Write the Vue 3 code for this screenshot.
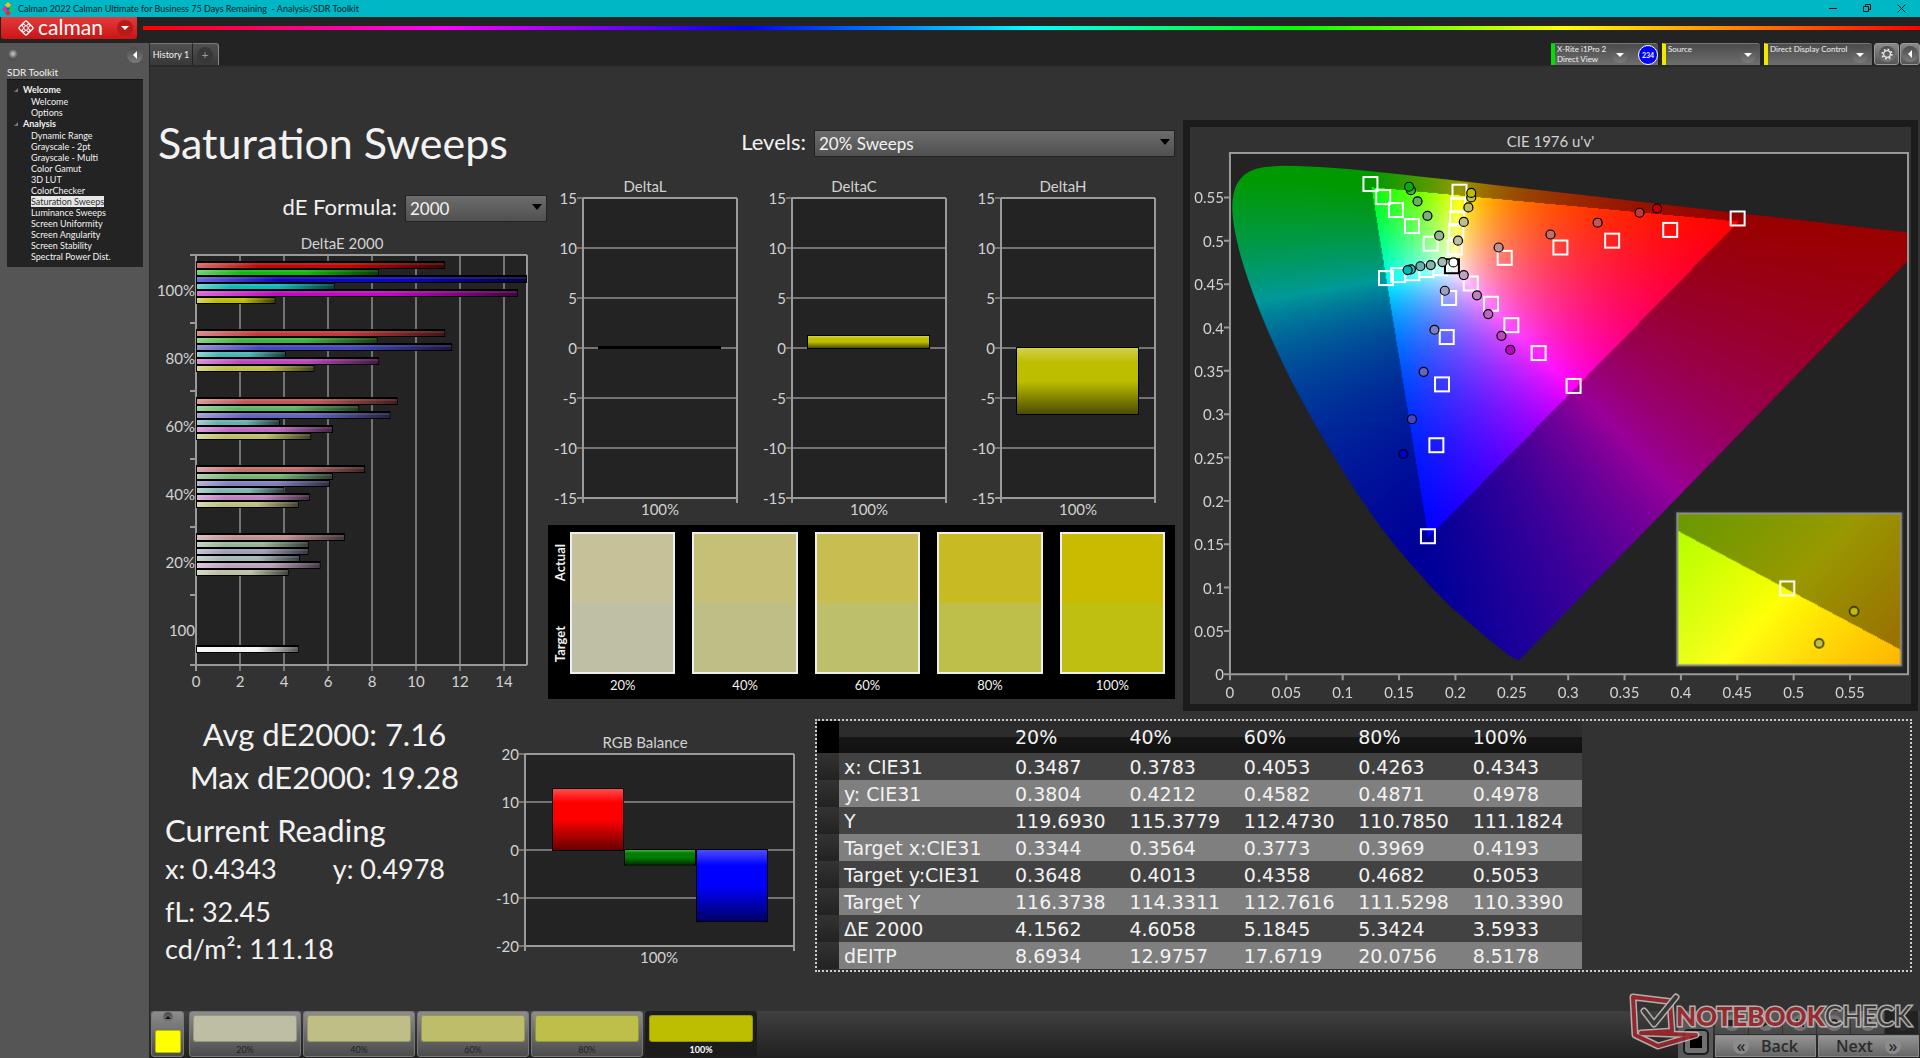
<script setup>
import { onMounted, ref } from 'vue'

const tree = [
  { name: 'Welcome', items: ['Welcome', 'Options'] },
  {
    name: 'Analysis',
    items: ['Dynamic Range', 'Grayscale - 2pt', 'Grayscale - Multi', 'Color Gamut', '3D LUT', 'ColorChecker', 'Saturation Sweeps', 'Luminance Sweeps', 'Screen Uniformity', 'Screen Angularity', 'Screen Stability', 'Spectral Power Dist.'],
  },
]

// DeltaE 2000, bars per saturation level: R, G, B, C, M, Y
const deGroups = [
  { label: '100%', values: [11.28, 8.26, 15, 6.25, 14.58, 3.56], colors: ['#c00808', '#10b810', '#0808c0', '#10b8b8', '#c008c0', '#bebe00'] },
  { label: '80%', values: [11.28, 8.2, 11.6, 4.03, 8.28, 5.33], colors: ['#c03a3a', '#40b440', '#4646be', '#48b4b4', '#c046c0', '#bebe4a'] },
  { label: '60%', values: [9.12, 7.37, 8.79, 3.76, 6.18, 5.19], colors: ['#c05656', '#60b460', '#6464be', '#68b0b0', '#c066c0', '#bebe6a'] },
  { label: '40%', values: [7.64, 6.18, 6.04, 3.97, 5.12, 4.62], colors: ['#c06e6e', '#78b478', '#8080be', '#84b4b4', '#c080c0', '#bebe86'] },
  { label: '20%', values: [6.72, 5.07, 5.07, 4.68, 5.61, 4.16], colors: ['#c09090', '#98b498', '#9e9ebe', '#a4b6b6', '#bea2be', '#bebea4'] },
  { label: '100', values: [4.62], colors: ['#f4f4f4'] },
]
const deX = (v) => 46 + v * 22
const deY = (g) => 25 + g * 68
const deBarY = (g, i) => (deGroups[g].values.length === 1 ? deY(g) + 50 : deY(g) + 6 + i * 7)

const deltas = [
  { title: 'DeltaL', value: 0.1 },
  { title: 'DeltaC', value: 1.2 },
  { title: 'DeltaH', value: -6.6 },
]
const deltaTicks = [15, 10, 5, 0, -5, -10, -15]
const deltaY = (v) => 174 - v * 10

const swatches = [
  { label: '20%', actual: '#c6c199', target: '#bebfa4' },
  { label: '40%', actual: '#c6bf78', target: '#bebf86' },
  { label: '60%', actual: '#c7bd50', target: '#bebf6a' },
  { label: '80%', actual: '#c8ba22', target: '#bebf4a' },
  { label: '100%', actual: '#c9bb00', target: '#bebf10' },
]
const tiles = [
  { label: '20%', color: '#bebea4' },
  { label: '40%', color: '#bebe86' },
  { label: '60%', color: '#bebe6a' },
  { label: '80%', color: '#bebe4a' },
  { label: '100%', color: '#bebe00' },
]

const rgbTicks = [20, 10, 0, -10, -20]
const rgbY = (v) => 136 - v * 48 / 10
const rgbBars = [
  { x: 68, value: 12.7, color: '#ff0000' },
  { x: 140, value: -3, color: '#008000' },
  { x: 212, value: -14.8, color: '#0000ff' },
]

const columns = ['20%', '40%', '60%', '80%', '100%']
const rows = [
  ['x: CIE31', '0.3487', '0.3783', '0.4053', '0.4263', '0.4343'],
  ['y: CIE31', '0.3804', '0.4212', '0.4582', '0.4871', '0.4978'],
  ['Y', '119.6930', '115.3779', '112.4730', '110.7850', '111.1824'],
  ['Target x:CIE31', '0.3344', '0.3564', '0.3773', '0.3969', '0.4193'],
  ['Target y:CIE31', '0.3648', '0.4013', '0.4358', '0.4682', '0.5053'],
  ['Target Y', '116.3738', '114.3311', '112.7616', '111.5298', '110.3390'],
  ['ΔE 2000', '4.1562', '4.6058', '5.1845', '5.3424', '3.5933'],
  ['dEITP', '8.6934', '12.9757', '17.6719', '20.0756', '8.5178'],
]

// CIE 1976 chart geometry
const PX = 40, PY = 26, PW = 679, PH = 522, SU = 1129, SV = 868
const cx = (u) => PX + u * SU
const cy = (v) => PY + PH - v * SV
const uTicks = [0, 0.05, 0.1, 0.15, 0.2, 0.25, 0.3, 0.35, 0.4, 0.45, 0.5, 0.55]
const targets = [
  [0.1246, 0.5655], [0.1359, 0.5505], [0.1472, 0.5355], [0.1614, 0.517], [0.1781, 0.4967],
  [0.2036, 0.5567], [0.2023, 0.5412], [0.2015, 0.5258], [0.2007, 0.5112], [0.1994, 0.4923],
  [0.2437, 0.4804], [0.2931, 0.4923], [0.339, 0.5002], [0.3905, 0.5126], [0.4503, 0.5258],
  [0.1384, 0.457], [0.1492, 0.4605], [0.1618, 0.4627], [0.1743, 0.4663], [0.1865, 0.4685],
  [0.2136, 0.4508], [0.2316, 0.4274], [0.2496, 0.4027], [0.2738, 0.3705], [0.3048, 0.3326],
  [0.1944, 0.4341], [0.1923, 0.389], [0.1881, 0.3344], [0.1831, 0.2642], [0.1756, 0.1592],
]
const readings = [
  [0.1856, 0.506, '#98b498'], [0.1752, 0.5289, '#78b478'], [0.1664, 0.5456, '#60b460'], [0.1605, 0.5584, '#40b440'], [0.1589, 0.5624, '#00b400'],
  [0.2023, 0.5002, '#bebea4'], [0.2074, 0.5218, '#bebe86'], [0.2115, 0.5386, '#bebe6a'], [0.214, 0.5501, '#bebe4a'], [0.214, 0.5553, '#bebe00'],
  [0.2383, 0.4923, '#c09090'], [0.2843, 0.5073, '#c06e6e'], [0.3261, 0.5209, '#c05656'], [0.3633, 0.5324, '#c03a3a'], [0.3788, 0.5373, '#c00000'],
  [0.1885, 0.4755, '#a4b6b6'], [0.1781, 0.472, '#84b4b4'], [0.1689, 0.4707, '#68b0b0'], [0.1605, 0.4671, '#48b4b4'], [0.1576, 0.4663, '#00b8b8'],
  [0.2074, 0.4605, '#bea2be'], [0.2191, 0.4371, '#c080c0'], [0.2291, 0.4155, '#c066c0'], [0.2408, 0.3904, '#c046c0'], [0.2487, 0.3741, '#c000c0'],
  [0.1906, 0.4424, '#9e9ebe'], [0.1814, 0.3974, '#8080be'], [0.1718, 0.3489, '#6464be'], [0.1614, 0.2942, '#4646be'], [0.1538, 0.2541, '#0000c0'],
  [0.1982, 0.4751, '#ffffff'],
]

const locus = [
  [0.1741, 0.005], [0.1714, 0.0051], [0.1644, 0.0109], [0.1566, 0.0177], [0.144, 0.0297], [0.1241, 0.0578],
  [0.1096, 0.0868], [0.0913, 0.1327], [0.0687, 0.2007], [0.0454, 0.295], [0.0235, 0.4127], [0.0082, 0.5384],
  [0.0039, 0.6548], [0.0139, 0.7502], [0.0389, 0.812], [0.0743, 0.8338], [0.1142, 0.8262], [0.1547, 0.8059],
  [0.2296, 0.7543], [0.3016, 0.6923], [0.3731, 0.6245], [0.4441, 0.5547], [0.5125, 0.4866], [0.5752, 0.4242],
  [0.627, 0.3725], [0.6915, 0.3083], [0.726, 0.274], [0.7347, 0.2653],
]

const gamutCanvas = ref(null)
const insetCanvas = ref(null)

// Brightest displayable colour for a chromaticity, dimmed outside Rec.709
function chromaColor(x, y) {
  const X = x / y
  const Z = (1 - x - y) / y
  const lin = [
    3.2406 * X - 1.5372 - 0.4986 * Z,
    -0.9689 * X + 1.8758 + 0.0415 * Z,
    0.0557 * X - 0.204 + 1.057 * Z,
  ]
  const k = Math.min(...lin) < 0 ? 0.6 : 1
  const top = Math.max(...lin)
  return lin.map((c) => 255 * k * Math.max(0, c) / top)
}

function paint(canvas, toXy) {
  const { width, height } = canvas
  const buffer = document.createElement('canvas')
  buffer.width = width
  buffer.height = height
  const bctx = buffer.getContext('2d')
  const img = bctx.createImageData(width, height)
  for (let j = 0; j < height; j++) {
    for (let i = 0; i < width; i++) {
      const [x, y] = toXy(i, j)
      const [r, g, b] = chromaColor(x, Math.max(y, 0.0001))
      img.data.set([r, g, b, 255], (j * width + i) * 4)
    }
  }
  bctx.putImageData(img, 0, 0)
  return buffer
}

onMounted(() => {
  const main = gamutCanvas.value
  const full = paint(main, (i, j) => {
    const u = i / SU
    const v = (PH - j) / SV
    const d = 6 * u - 16 * v + 12
    return [9 * u / d, 4 * v / d]
  })
  const ctx = main.getContext('2d')
  const pts = locus.map(([x, y]) => {
    const d = -2 * x + 12 * y + 3
    return [4 * x / d * SU, PH - 9 * y / d * SV]
  })
  ctx.beginPath()
  ctx.moveTo(...pts[0])
  for (let i = 1; i < pts.length - 1; i++) {
    const [x, y] = pts[i]
    const [nx, ny] = pts[i + 1]
    ctx.quadraticCurveTo(x, y, (x + nx) / 2, (y + ny) / 2)
  }
  ctx.lineTo(...pts[pts.length - 1])
  ctx.closePath()
  ctx.clip()
  ctx.drawImage(full, 0, 0)

  const inset = insetCanvas.value
  const zoomed = paint(inset, (i, j) => [0.4193 + (i - 111) / 4467, 0.5053 - (j - 76) / 3000])
  inset.getContext('2d').drawImage(zoomed, 0, 0)
})
</script>

<template>
  <div class="app">
    <div class="titlebar">
      <svg class="app-icon" width="12" height="14" viewBox="0 0 12 14">
        <path d="M6 0l3 3-3 3-3-3z" fill="#f5c400" /><path d="M3 4l3 3-3 3-3-3z" fill="#e8308a" />
        <path d="M9 4l3 3-3 3-3-3z" fill="#22c34a" /><path d="M6 8l3 3-3 3-3-3z" fill="#e03030" />
        <path d="M6 5l2 2-2 2-2-2z" fill="#1e5fd0" />
      </svg>
      <span>Calman 2022 Calman Ultimate for Business 75 Days Remaining&nbsp; - Analysis/SDR Toolkit</span>
      <div class="win-buttons">
        <button type="button" aria-label="Minimize"><svg width="9" height="9"><path d="M0 4.500h8" stroke="#111" fill="none" /></svg></button>
        <button type="button" aria-label="Restore"><svg width="9" height="9"><path d="M.5 2.500h5v5h-5zM2.500 2V.5h5v5H6" stroke="#111" fill="none" /></svg></button>
        <button type="button" aria-label="Close"><svg width="9" height="9"><path d="M.5.5l8 8M8.500.5l-8 8" stroke="#111" fill="none" /></svg></button>
      </div>
    </div>

    <div class="brand-row">
      <button type="button" class="brand">
        <svg width="18" height="18" viewBox="0 0 18 18">
          <rect x="3" y="3" width="12" height="12" rx="2" transform="rotate(45 9 9)" fill="#fff" />
          <g fill="#d42323">
            <path d="M9 2.400l2 2-2 2-2-2zM9 7l2 2-2 2-2-2zM9 11.600l2 2-2 2-2-2zM4.400 7l2 2-2 2-2-2zM13.600 7l2 2-2 2-2-2z" />
            <circle cx="6.700" cy="6.700" r="1" /><circle cx="11.300" cy="6.700" r="1" /><circle cx="6.700" cy="11.300" r="1" /><circle cx="11.300" cy="11.300" r="1" />
          </g>
        </svg>
        <span class="brand-name">calman</span>
        <span class="round red"><i class="tri-down"></i></span>
      </button>
      <div class="rainbow"></div>
    </div>

    <div class="workspace">
      <aside class="sidebar">
        <div class="side-top">
          <span class="knob"></span>
          <button type="button" class="round side-collapse" aria-label="Collapse"><i class="tri-left"></i></button>
        </div>
        <div class="side-title">SDR Toolkit</div>
        <nav class="tree">
          <template v-for="g in tree" :key="g.name">
            <div class="tree-group"><i class="expander"></i>{{ g.name }}</div>
            <div v-for="it in g.items" :key="it" class="tree-item">
              <a href="#" :class="{ selected: it === 'Saturation Sweeps' }">{{ it }}</a>
            </div>
          </template>
        </nav>
      </aside>

      <div class="stage">
        <div class="tabs">
          <button type="button" class="tab">History 1</button>
          <button type="button" class="tab add" aria-label="Add history"><span class="round dim">+</span></button>
          <div class="devices">
            <button type="button" class="device meter">
              <span class="device-name">X-Rite i1Pro 2<br>Direct View</span>
              <span class="round"><i class="tri-down"></i></span>
              <span class="badge">234</span>
            </button>
            <button type="button" class="device source"><span class="device-name">Source</span><span class="round"><i class="tri-down"></i></span></button>
            <button type="button" class="device display"><span class="device-name">Direct Display Control</span><span class="round"><i class="tri-down"></i></span></button>
            <div class="tools">
              <button type="button" class="tool" aria-label="Settings">
                <span class="round">
                  <svg width="12" height="12" viewBox="0 0 12 12"><circle cx="6" cy="6" r="3.400" fill="none" stroke="#eee" stroke-width="1.200" /><circle cx="6" cy="6" r="4.800" fill="none" stroke="#eee" stroke-width="1.600" stroke-dasharray="1.700 2.070" /></svg>
                </span>
              </button>
              <button type="button" class="tool narrow" aria-label="Expand"><span class="round"><i class="tri-left"></i></span></button>
            </div>
          </div>
        </div>

        <main class="content">
          <section class="upper">
            <div class="col-a">
              <h1>Saturation Sweeps</h1>
              <div class="field">
                <label for="formula">dE Formula:</label>
                <div class="select formula"><select id="formula"><option>2000</option></select></div>
              </div>
              <svg class="chart" viewBox="0 0 397 470">
                <defs>
                  <linearGradient id="sheenH" x1="0" x2="1" y1="0" y2="0">
                    <stop offset="0" stop-color="#fff" stop-opacity=".4" /><stop offset=".25" stop-color="#fff" stop-opacity="0" />
                    <stop offset=".6" stop-color="#000" stop-opacity="0" /><stop offset="1" stop-color="#000" stop-opacity=".65" />
                  </linearGradient>
                  <linearGradient id="sheenV" x1="0" x2="0" y1="0" y2="1">
                    <stop offset="0" stop-color="#fff" stop-opacity=".3" /><stop offset=".22" stop-color="#fff" stop-opacity="0" />
                    <stop offset=".5" stop-color="#000" stop-opacity="0" /><stop offset="1" stop-color="#000" stop-opacity=".6" />
                  </linearGradient>
                </defs>
                <text x="192" y="19" text-anchor="middle">DeltaE 2000</text>
                <rect x="46" y="25" width="331" height="410" class="plot" />
                <g class="grid">
                  <path v-for="n in 7" :key="n" :d="`M${deX(n * 2)} 25v416`" />
                  <path d="M46 25v416M377 25v410M40 25h337M40 435h337" class="frame" />
                  <path v-for="n in 5" :key="'c' + n" :d="`M40 ${deY(n)}h6`" class="frame" />
                </g>
                <template v-for="(g, gi) in deGroups" :key="g.label">
                  <text x="45" :y="deY(gi) + 41" text-anchor="end">{{ g.label }}</text>
                  <g v-for="(v, i) in g.values" :key="i">
                    <rect x="46" :y="deBarY(gi, i)" :width="v * 22 + 1" height="8" />
                    <rect x="47" :y="deBarY(gi, i) + 2" :width="v * 22 - 1" height="5" :fill="g.colors[i]" />
                    <rect x="47" :y="deBarY(gi, i) + 2" :width="v * 22 - 1" height="5" fill="url(#sheenH)" />
                    <rect x="47" :y="deBarY(gi, i) + 2" :width="v * 22 - 1" height="2" fill="#fff" opacity=".1" />
                  </g>
                </template>
                <text v-for="n in 8" :key="'t' + n" :x="deX(n * 2 - 2)" y="457" text-anchor="middle">{{ n * 2 - 2 }}</text>
              </svg>
            </div>

            <div class="col-b">
              <div class="field levels">
                <label for="levels">Levels:</label>
                <div class="select level"><select id="levels"><option>20% Sweeps</option></select></div>
              </div>
              <div class="deltas">
                <svg v-for="d in deltas" :key="d.title" class="chart" viewBox="0 0 209 347">
                  <text x="95" y="18" text-anchor="middle">{{ d.title }}</text>
                  <rect x="33" y="24" width="154" height="300" class="plot" />
                  <g class="grid">
                    <path v-for="t in deltaTicks" :key="t" :d="`M27 ${deltaY(t)}h160`" />
                    <path d="M33 24v305M187 24v305M33 24h154M27 324h160" class="frame" />
                  </g>
                  <text v-for="t in deltaTicks" :key="t" x="27" :y="deltaY(t) + 6" text-anchor="end">{{ t }}</text>
                  <rect x="48" :y="Math.min(174, deltaY(d.value)) - 1" width="123" :height="Math.abs(d.value) * 10 + 2" />
                  <template v-if="Math.abs(d.value) > 1">
                    <rect x="49" :y="Math.min(174, deltaY(d.value))" width="121" :height="Math.abs(d.value) * 10" fill="#bebe00" />
                    <rect x="49" :y="Math.min(174, deltaY(d.value))" width="121" :height="Math.abs(d.value) * 10" fill="url(#sheenV)" />
                  </template>
                  <text x="110" y="341" text-anchor="middle">100%</text>
                </svg>
              </div>
              <div class="compare">
                <div class="side-labels"><span>Actual</span><span>Target</span></div>
                <div v-for="s in swatches" :key="s.label" class="swatch">
                  <div class="patch"><div :style="{ background: s.actual }"></div><div :style="{ background: s.target }"></div></div>
                  <span>{{ s.label }}</span>
                </div>
              </div>
            </div>

            <div class="cie">
              <svg class="chart" viewBox="0 0 722 578">
                <text x="361" y="20" text-anchor="middle">CIE 1976 u'v'</text>
                <rect :x="PX" :y="PY" :width="PW" :height="PH" class="plot" />
                <foreignObject :x="PX" :y="PY" :width="PW" :height="PH"><canvas ref="gamutCanvas" class="canvas" :width="PW" :height="PH"></canvas></foreignObject>
                <g class="grid">
                  <rect :x="PX" :y="PY" :width="PW" :height="PH" fill="none" class="frame" />
                  <path v-for="t in uTicks" :key="t" :d="`M${cx(t)} ${cy(0)}v6M${PX} ${cy(t)}h-6`" class="frame" />
                </g>
                <text v-for="t in uTicks" :key="'u' + t" :x="cx(t)" :y="cy(0) + 24" text-anchor="middle">{{ t }}</text>
                <text v-for="t in uTicks" :key="'v' + t" x="34" :y="cy(t) + 6" text-anchor="end">{{ t }}</text>
                <rect v-for="(t, i) in targets" :key="'s' + i" :x="cx(t[0]) - 7" :y="cy(t[1]) - 7" width="14" height="14" fill="none" stroke="#fff" stroke-width="2" />
                <rect :x="cx(0.1969) - 7" :y="cy(0.4707) - 7" width="14" height="14" fill="none" stroke="#000" stroke-width="2" />
                <circle v-for="(r, i) in readings" :key="'r' + i" :cx="cx(r[0])" :cy="cy(r[1])" r="4.500" :fill="r[2]" stroke="#000" stroke-width="1.200" />
                <rect x="485" y="384" width="230" height="158" fill="#2b2b2b" />
                <foreignObject x="488" y="387" width="224" height="152"><canvas ref="insetCanvas" class="canvas" width="224" height="152"></canvas></foreignObject>
                <rect x="488" y="387" width="224" height="152" fill="none" stroke="#8c8c8c" stroke-width="2" />
                <rect x="591" y="455" width="14" height="14" fill="none" stroke="#fff" stroke-width="2" />
                <circle cx="665" cy="485" r="4.500" fill="#bebe00" stroke="#000" stroke-width="1.200" />
                <circle cx="630" cy="517" r="4.500" fill="#bebe4a" stroke="#000" stroke-width="1.200" />
              </svg>
            </div>
          </section>

          <section class="lower">
            <div class="stats">
              <div class="big">Avg dE2000: 7.16</div>
              <div class="big">Max dE2000: 19.28</div>
              <div class="heading">Current Reading</div>
              <div class="pair"><span>x: 0.4343</span><span>y: 0.4978</span></div>
              <div class="line">fL: 32.45</div>
              <div class="line">cd/m²: 111.18</div>
            </div>
            <div class="balance">
              <svg class="chart" viewBox="0 5 331 252">
                <text x="161" y="34" text-anchor="middle">RGB Balance</text>
                <rect x="41" y="40" width="269" height="192" class="plot" />
                <g class="grid">
                  <path v-for="t in rgbTicks" :key="t" :d="`M35 ${rgbY(t)}h275`" />
                  <path d="M41 40v197M310 40v197M41 40h269M41 232h269" class="frame" />
                </g>
                <text v-for="t in rgbTicks" :key="t" x="35" :y="rgbY(t) + 6" text-anchor="end">{{ t }}</text>
                <g v-for="b in rgbBars" :key="b.x">
                  <rect :x="b.x" :y="Math.min(136, rgbY(b.value)) - 1" width="72" :height="Math.abs(b.value) * 4.8 + 2" />
                  <rect :x="b.x + 1" :y="Math.min(136, rgbY(b.value))" width="70" :height="Math.abs(b.value) * 4.8" :fill="b.color" />
                  <rect :x="b.x + 1" :y="Math.min(136, rgbY(b.value))" width="70" :height="Math.abs(b.value) * 4.8" fill="url(#sheenV)" />
                </g>
                <text x="175" y="249" text-anchor="middle">100%</text>
              </svg>
            </div>
            <div class="table-box">
              <table>
                <thead>
                  <tr><th class="sel"></th><th class="name"></th><th v-for="c in columns" :key="c" scope="col">{{ c }}</th></tr>
                </thead>
                <tbody>
                  <tr v-for="r in rows" :key="r[0]">
                    <td class="sel"></td>
                    <th scope="row">{{ r[0] }}</th>
                    <td v-for="(c, i) in r.slice(1)" :key="i">{{ c }}</td>
                  </tr>
                </tbody>
              </table>
            </div>
          </section>
        </main>

        <footer class="bottombar">
          <button type="button" class="current" aria-label="Show patterns"><span class="round small"><i class="tri-up"></i></span><span class="current-color"></span></button>
          <div class="tiles">
            <button v-for="t in tiles" :key="t.label" type="button" class="tile" :class="{ active: t.label === '100%' }">
              <span class="tile-color" :style="{ background: t.color }"></span>{{ t.label }}
            </button>
          </div>
          <div class="controls">
            <button type="button" class="stop" aria-label="Stop"><i></i></button>
            <div class="nav">
              <div class="transport">
                <button type="button" aria-label="Pause"><span class="round"><svg width="10" height="10"><path d="M1 2h6v6H1z" fill="#222" /></svg></span></button>
                <button type="button" aria-label="Play"><span class="round"><svg width="10" height="10"><path d="M2 1l7 4-7 4z" fill="#222" /></svg></span></button>
                <button type="button" aria-label="Read series"><span class="round"><svg width="10" height="10"><path d="M1 1h2v8H1zM4 1h2v8H4zM7 1h2v8H7z" fill="#222" /></svg></span></button>
                <button type="button" aria-label="Repeat"><span class="round"><svg width="10" height="10"><circle cx="5" cy="5" r="3" fill="none" stroke="#222" stroke-width="2" /></svg></span></button>
                <button type="button" aria-label="Refresh"><span class="round"><svg width="10" height="10"><path d="M8 3a4 4 0 1 0 1 3" fill="none" stroke="#222" stroke-width="2" /></svg></span></button>
                <button type="button" class="off" aria-label="Lock"><span class="round"></span></button>
              </div>
              <div class="steps">
                <button type="button"><span class="round">«</span>Back</button>
                <button type="button">Next<span class="round">»</span></button>
              </div>
            </div>
          </div>
          <svg class="watermark" width="288" height="58" viewBox="0 0 288 58">
            <g fill="none" stroke-linejoin="round" stroke-linecap="round">
              <path d="M4 5L41 9.500L43 39L12 41L67 43L29 54L6 43Z" stroke="#c9c4c0" stroke-width="7" />
              <path d="M4 5L41 9.500L43 39L12 41L67 43L29 54L6 43Z" stroke="#a3262e" stroke-width="4" />
              <path d="M15 19L25 32L47 5" stroke="#c9c4c0" stroke-width="7" />
              <path d="M15 19L25 32L47 5" stroke="#3a3a3a" stroke-width="4" />
            </g>
            <text x="47" y="34" class="mark"><tspan class="mark-red">NOTEBOOK</tspan><tspan class="mark-grey">CHECK</tspan></text>
          </svg>
        </footer>
      </div>
    </div>
  </div>
</template>

<style>
body {
  background: #323232;
}
</style>

<style scoped>
.app {
  min-height: 100vh;
  display: flex;
  flex-direction: column;
  font-family: Lato, "Liberation Sans", sans-serif;
  color: #f2f2f2;
  background: #232323;
}
.app * {
  box-sizing: border-box;
}
button {
  font: inherit;
  color: inherit;
  border: 0;
  padding: 0;
  background: none;
}
.titlebar {
  height: 17px;
  background: #00b7c6;
  color: #0a1a1c;
  display: flex;
  align-items: center;
  gap: 4px;
  padding: 0 14px 0 2px;
  font-size: 9px;
}
.win-buttons {
  margin-left: auto;
  display: flex;
  gap: 25px;
}
.win-buttons button {
  display: flex;
}
.brand-row {
  display: flex;
  align-items: flex-start;
  height: 26px;
}
.brand {
  width: 136px;
  height: 22px;
  margin-left: 1px;
  padding: 0 4px 0 16px;
  display: flex;
  align-items: center;
  gap: 3px;
  background: linear-gradient(#e33a3a, #cc1414);
  border-radius: 0 0 3px 3px;
  color: #fff;
}
.brand-name {
  font-size: 21px;
  line-height: 18px;
  height: 20px;
}
.round {
  width: 16px;
  height: 16px;
  border-radius: 50%;
  display: flex;
  align-items: center;
  justify-content: center;
  flex: none;
  background: linear-gradient(#4c4c4c, #7c7c7c);
}
.round.red {
  margin-left: auto;
  background: #b81a1a;
}
.round.dim {
  background: #383838;
  color: #999;
  font-size: 12px;
}
.round.small {
  width: 10px;
  height: 10px;
}
.tri-down {
  border: 4px solid transparent;
  border-top-color: #fff;
  border-bottom: 0;
}
.tri-up {
  border: 3px solid transparent;
  border-bottom-color: #111;
  border-top: 0;
}
.tri-left {
  border: 4px solid transparent;
  border-right-color: #fff;
  border-left: 0;
}
.rainbow {
  flex: 1;
  height: 4px;
  margin: 9px 0 0 6px;
  background: linear-gradient(90deg, #f00, #f0f 17%, #00f 34%, #0ff 50%, #0f0 65%, #ff0 80%, #f00);
}
.workspace {
  flex: 1;
  display: flex;
}
.sidebar {
  width: 150px;
  flex: none;
  background: #555;
  border-right: 1px solid #262626;
  padding: 3px 6px 0 7px;
}
.side-top {
  display: flex;
  justify-content: space-between;
  align-items: center;
  height: 18px;
}
.knob {
  width: 12px;
  height: 12px;
  border-radius: 50%;
  background: radial-gradient(circle at 50% 40%, #ccc, #555 50%, #484848);
}
.side-title {
  font-size: 10px;
  line-height: 12px;
  padding: 2px 0 1px;
}
.tree {
  background: #232323;
  border-top: 1px solid #151515;
  padding: 4px 0 5px;
  font-size: 9px;
  line-height: 11px;
  height: 188px;
}
.tree-group {
  font-weight: 700;
  display: flex;
  align-items: center;
  gap: 5px;
  padding-left: 7px;
  line-height: 12px;
}
.tree-item {
  padding-left: 24px;
}
.tree-item a {
  color: inherit;
  text-decoration: none;
}
.tree-item a.selected {
  background: #e6e6e6;
  color: #333;
}
.expander {
  border: 2px solid transparent;
  border-right-color: #777;
  border-bottom-color: #777;
  width: 3px;
  height: 3px;
}
.stage {
  flex: 1;
  min-width: 0;
  display: flex;
  flex-direction: column;
}
.tabs {
  display: flex;
  height: 23px;
  border-bottom: 1px solid #2a2a2a;
}
.tab {
  width: 43px;
  font-size: 9px;
  background: linear-gradient(#505050, #383838);
  border-top: 1px solid #777;
  border-right: 1px solid #222;
}
.tab.add {
  width: 26px;
  padding: 0 4px;
  border-right: 1px solid #888;
  border-top-right-radius: 3px;
}
.devices {
  margin-left: auto;
  display: flex;
  gap: 4px;
}
.device {
  display: flex;
  align-items: center;
  width: 108px;
  padding: 0 4px 0 2px;
  gap: 4px;
  background: linear-gradient(#4c4c4c, #6e6e6e);
  border-left: 4px solid #f0e800;
  border-top: 1px solid #777;
  border-top-right-radius: 3px;
  text-align: left;
  font-size: 8px;
  line-height: 10px;
  white-space: nowrap;
}
.device.meter {
  width: 107px;
  border-left-color: #00e000;
  padding-right: 0;
}
.device.source {
  width: 98px;
}
.device-name {
  flex: 1;
  align-self: flex-start;
}
.badge {
  width: 20px;
  height: 20px;
  border-radius: 50%;
  background: #00f;
  border: 1px solid #fff;
  font-size: 7px;
  font-weight: 700;
  line-height: 18px;
  text-align: center;
  margin-left: 6px;
}
.tools {
  display: flex;
  gap: 1px;
  margin-left: -2px;
}
.tool {
  width: 25px;
  height: 22px;
  padding: 0 4px;
  border: 1px solid #999;
  border-radius: 3px;
  background: linear-gradient(#8a8a8a, #555);
}
.tool.narrow {
  width: 20px;
  padding: 0 1px;
}
.content {
  flex: 1;
  background: #323232;
  border-top: 1px solid #2a2a2a;
}
.upper {
  display: grid;
  grid-template-columns: 397fr 635fr 738fr;
}
.chart {
  display: block;
  width: 100%;
  height: auto;
}
.chart text {
  font-size: 15px;
  fill: #d2d2d2;
}
.plot {
  fill: #232323;
}
.grid {
  stroke: #747474;
  stroke-width: 2;
  fill: none;
}
.grid .frame {
  stroke: #9a9a9a;
}
.col-a {
  padding-top: 51px;
}
h1 {
  margin: 0 0 0 8px;
  font-size: 43px;
  line-height: 50px;
  font-weight: 400;
  white-space: nowrap;
}
.field {
  display: flex;
  justify-content: flex-end;
  align-items: center;
  gap: 8px;
  height: 28px;
  margin-top: 24px;
  margin-bottom: 10px;
  font-size: 22px;
}
.select {
  position: relative;
  height: 27px;
}
.select.formula {
  width: 142px;
}
.select.level {
  width: 361px;
}
.select select {
  appearance: none;
  width: 100%;
  height: 100%;
  padding: 0 4px;
  border: 1px solid #222;
  border-radius: 0;
  background: linear-gradient(#6c6c6c, #505050);
  color: #f2f2f2;
  font: 17px Lato, "Liberation Sans", sans-serif;
}
.select::after {
  content: "";
  position: absolute;
  right: 5px;
  top: 11px;
  border: 5px solid transparent;
  border-top: 6px solid #000;
  border-bottom: 0;
}
.col-b {
  padding: 60px 7px 0 1px;
}
.field.levels {
  margin: 0 0 19px;
}
.deltas {
  display: flex;
  padding-left: 2px;
  margin-right: -2px;
}
.deltas .chart {
  flex: 1;
  min-width: 0;
}
.compare {
  background: #000;
  margin-top: 4px;
  height: 174px;
  display: flex;
  gap: 17px;
  padding: 7px 10px 0 2px;
}
.side-labels {
  width: 20px;
  margin-right: -17px;
  height: 142px;
  padding: 12px 0;
  display: flex;
  flex-direction: column;
  justify-content: space-between;
  align-items: center;
  font-size: 13px;
  font-weight: 700;
}
.side-labels span {
  writing-mode: vertical-rl;
  transform: rotate(180deg);
}
.swatch {
  flex: 1;
  text-align: center;
  font-size: 13px;
  line-height: 22px;
}
.patch {
  height: 142px;
  border: 2px solid #eee;
  display: flex;
  flex-direction: column;
}
.patch div {
  flex: 1;
}
.cie {
  margin: 53px 2px 0 1px;
  border: 7px solid #1b1b1b;
  align-self: start;
}
.canvas {
  display: block;
  width: 100%;
  height: 100%;
}
.lower {
  display: grid;
  grid-template-columns: 334fr 331fr 1097fr 8fr;
  align-items: start;
  margin-top: 8px;
}
.stats {
  padding-left: 15px;
}
.big {
  font-size: 31px;
  line-height: 43px;
  text-align: center;
  white-space: nowrap;
}
.big:first-child {
  margin-top: -6px;
}
.heading {
  font-size: 31px;
  line-height: 40px;
  margin-top: 11px;
}
.pair,
.line {
  font-size: 27px;
  line-height: 37px;
}
.pair {
  display: flex;
  gap: 56px;
  margin-bottom: 6px;
  white-space: nowrap;
}
.table-box {
  border: 2px dotted #ccc;
  padding-bottom: 1px;
}
table {
  border-collapse: collapse;
  width: 70%;
  table-layout: fixed;
  font: 19px "DejaVu Sans", sans-serif;
}
th,
td {
  font-weight: 400;
  text-align: left;
  white-space: nowrap;
  padding: 0 0 0 5px;
  height: 27px;
  line-height: 26px;
}
thead th {
  height: 32px;
  background: linear-gradient(#2c2c2c 50%, #161616 50%, #111);
}
thead th.name {
  width: 171px;
}
tbody tr {
  background: #424242;
}
tbody tr:nth-child(even) {
  background: #7f7f7f;
}
.sel,
thead th.sel {
  width: 22px;
  background: linear-gradient(#333, #222);
}
thead th.sel {
  background: #000;
}
.bottombar {
  position: relative;
  height: 47px;
  display: flex;
  gap: 5px;
  padding-left: 1px;
  background: linear-gradient(#404040, #202020);
}
.current,
.tile {
  background: linear-gradient(#8c8c8c, #4c4c4c);
  border: 1px solid #777;
  border-radius: 3px;
  height: 46px;
}
.current {
  width: 33px;
  display: flex;
  flex-direction: column;
  align-items: center;
  gap: 8px;
}
.current-color {
  width: 26px;
  height: 23px;
  background: #ff0;
  border: 1px solid #bb0;
  border-radius: 2px;
}
.tiles {
  display: flex;
  gap: 2px;
}
.tile {
  width: 112px;
  padding: 3px;
  font-size: 9px;
  line-height: 15px;
  color: #222;
}
.tile-color {
  display: block;
  height: 27px;
  border: 1px solid #0003;
  border-radius: 3px;
}
.tile.active {
  background: #1c1c1c;
  border-color: #1c1c1c;
  color: #fff;
  font-weight: 700;
}
.controls {
  margin-left: auto;
  display: flex;
  gap: 2px;
  padding-right: 1px;
}
.stop {
  width: 35px;
  display: flex;
  align-items: flex-end;
  justify-content: center;
  padding-bottom: 5px;
  background: #585858;
}
.stop i {
  width: 22px;
  height: 22px;
  border: 5px solid #707070;
  outline: 2px solid #1c1c1c;
  background: #000;
  border-radius: 3px;
}
.transport {
  display: flex;
  gap: 1px;
  height: 23px;
}
.transport button {
  width: 33px;
  display: flex;
  justify-content: center;
  align-items: center;
  background: linear-gradient(#5c5c5c, #484848);
}
.transport .off {
  background: #222;
}
.transport .off .round {
  background: #2c2c2c;
}
.transport .round {
  background: #727272;
}
.steps {
  display: flex;
  gap: 2px;
  margin-top: 1px;
}
.steps button {
  width: 101px;
  height: 22px;
  display: flex;
  align-items: center;
  justify-content: center;
  gap: 12px;
  font: 600 16px "Open Sans", sans-serif;
  color: #2c2c2c;
  background: linear-gradient(#949494, #666);
  border: 1px solid #888;
}
.steps .round {
  background: #8c8c8c;
  line-height: 12px;
}
.watermark {
  position: absolute;
  right: 3px;
  bottom: 8px;
  opacity: .85;
}
.chart text.mark,
.mark {
  font-size: 26px;
  stroke: #c9c4c0;
  stroke-width: 3px;
  paint-order: stroke;
}
.mark-red {
  fill: #a3262e;
  font-weight: 900;
}
.mark-grey {
  fill: #3a3a3a;
  font-weight: 400;
}
</style>
